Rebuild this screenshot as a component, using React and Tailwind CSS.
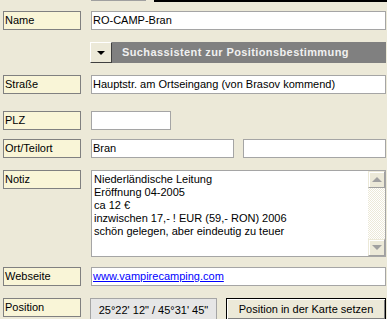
import React from "react";

const font = { fontFamily: '"Liberation Sans", Arial, sans-serif' };

function Label({ children }) {
  return (
    <div className="ml-[3px] w-[78px] h-[19px] shrink-0 border border-[#808080] bg-[#f9f5d7] pl-[1px] text-[11px] leading-[17px] text-black">
      {children}
    </div>
  );
}

function Input({ className = "", children }) {
  return (
    <div className={"h-[19px] border border-[#a5a5a5] bg-white pl-[1px] text-[11px] leading-[17px] text-black whitespace-nowrap overflow-hidden " + className}>
      {children}
    </div>
  );
}

export default function App() {
  return (
    <div className="w-[387px] h-[319px] overflow-hidden bg-[#ece9d8] text-[11px]" style={font}>
      {/* partial elements above */}
      <div className="flex h-[2px] items-start">
        <div className="ml-[91px] w-[55px] h-[1px] bg-[#a0a0a0]" />
        <div className="ml-[8px] flex-1 h-[2px] bg-black" />
      </div>

      {/* Name */}
      <div className="flex mt-[9px]">
        <Label>Name</Label>
        <Input className="ml-[10px] flex-1 mr-[1px]">RO-CAMP-Bran</Input>
      </div>

      {/* Suchassistent bar */}
      <div className="flex mt-[12px] h-[21px] ml-[90px] mr-[1px]">
        <div className="w-[22px] h-full shrink-0 bg-[#ece9d8] border-t border-l border-white border-r border-b border-r-[#404040] border-b-[#404040] flex items-center justify-center">
          <div className="w-0 h-0 border-l-[4px] border-r-[4px] border-t-[4px] border-l-transparent border-r-transparent border-t-black" />
        </div>
        <div className="flex-1 bg-[#808080] pl-[10px] font-bold tracking-[0.4px] text-[#f0f0f0] text-[11px] leading-[21px] whitespace-nowrap overflow-hidden">
          Suchassistent zur Positionsbestimmung
        </div>
      </div>

      {/* Straße */}
      <div className="flex mt-[12px]">
        <Label>Straße</Label>
        <Input className="ml-[10px] flex-1 mr-[1px]">Hauptstr. am Ortseingang (von Brasov kommend)</Input>
      </div>

      {/* PLZ */}
      <div className="flex mt-[17px]">
        <Label>PLZ</Label>
        <Input className="ml-[10px] w-[80px]"></Input>
      </div>

      {/* Ort/Teilort */}
      <div className="flex mt-[9px]">
        <Label>Ort/Teilort</Label>
        <Input className="ml-[10px] w-[143px]">Bran</Input>
        <Input className="ml-[9px] flex-1 mr-[1px]"></Input>
      </div>

      {/* Notiz */}
      <div className="flex mt-[12px]">
        <Label>Notiz</Label>
        <div className="ml-[10px] flex-1 mr-[1px] h-[87px] border border-[#a5a5a5] bg-white flex">
          <div className="flex-1 pl-[2px] pt-[2px] text-[11px] leading-[13px] text-black whitespace-nowrap overflow-hidden">
            <div>Niederländische Leitung</div>
            <div>Eröffnung 04-2005</div>
            <div>ca 12 €</div>
            <div>inzwischen 17,- ! EUR (59,- RON) 2006</div>
            <div>schön gelegen, aber eindeutig zu teuer</div>
          </div>
          <div className="w-[17px] shrink-0 flex flex-col bg-[repeating-conic-gradient(#ece9d8_0_25%,#ffffff_0_50%)] bg-[length:2px_2px]">
            <div className="h-[17px] bg-[#ece9d8] border-t border-l border-t-[#ece9d8] border-l-[#ece9d8] border-r border-b border-r-[#a0a0a0] border-b-[#a0a0a0] shadow-[inset_1px_1px_0_#ffffff] flex items-center justify-center">
              <div className="w-0 h-0 border-l-[5px] border-r-[5px] border-b-[5px] border-l-transparent border-r-transparent border-b-[#a0a0a0] mb-[1px]" />
            </div>
            <div className="flex-1" />
            <div className="h-[17px] bg-[#ece9d8] border-t border-l border-t-[#ece9d8] border-l-[#ece9d8] border-r border-b border-r-[#a0a0a0] border-b-[#a0a0a0] shadow-[inset_1px_1px_0_#ffffff] flex items-center justify-center">
              <div className="w-0 h-0 border-l-[5px] border-r-[5px] border-t-[5px] border-l-transparent border-r-transparent border-t-[#a0a0a0]" />
            </div>
          </div>
        </div>
      </div>

      {/* Webseite */}
      <div className="flex mt-[10px]">
        <Label>Webseite</Label>
        <Input className="ml-[10px] flex-1 mr-[1px]">
          <span className="text-[#0000ff] underline">www.vampirecamping.com</span>
        </Input>
      </div>

      {/* Position */}
      <div className="flex mt-[12px]">
        <Label>Position</Label>
        <div className="ml-[9px] w-[127px] h-[22px] border border-[#a5a5a5] bg-[#e6e6e6] text-center text-[11px] leading-[22px] text-black whitespace-nowrap">
          25°22' 12" / 45°31' 45"
        </div>
        <div className="ml-[9px] flex-1 mr-[1px] h-[22px] border border-black bg-[#ece9d8] shadow-[inset_1px_1px_0_#ffffff,inset_-1px_-1px_0_#808080] text-center text-[11px] leading-[20px] text-black whitespace-nowrap">
          Position in der Karte setzen
        </div>
      </div>
    </div>
  );
}
